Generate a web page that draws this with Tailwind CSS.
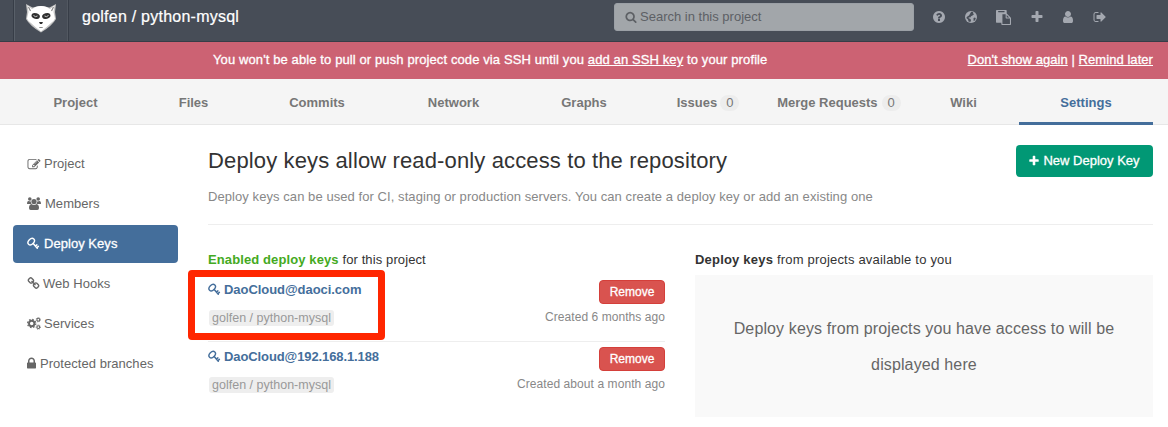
<!DOCTYPE html>
<html lang="en">
<head>
<meta charset="utf-8">
<title>golfen / python-mysql - Deploy Keys</title>
<script src="https://cdn.jsdelivr.net/npm/@tailwindcss/browser@4"></script>
</head>
<body class="w-[1168px] h-[427px] overflow-hidden bg-white font-['Liberation_Sans',Arial,sans-serif] text-[13px] leading-5 text-[#333]">
<svg class="hidden">
  <symbol id="plus" viewBox="0 0 1792 1792"><path d="M1600 736v192q0 40-28 68t-68 28h-416v416q0 40-28 68t-68 28h-192q-40 0-68-28t-28-68v-416h-416q-40 0-68-28t-28-68v-192q0-40 28-68t68-28h416v-416q0-40 28-68t68-28h192q40 0 68 28t28 68v416h416q40 0 68 28t28 68z"/></symbol>
  <symbol id="key" viewBox="0 0 13 13"><g fill="none" stroke="currentColor" stroke-linecap="round"><ellipse cx="4.200" cy="4.700" rx="3.700" ry="2.600" stroke-width="1.400" transform="rotate(-45 4.200 4.700)"/><path stroke-width="1.500" d="M6.200 6.500L10.300 11.300M8.500 9L9.900 7.900M10 10.500L11.400 9.400"/></g></symbol>
</svg>

<header class="h-[42px] bg-[#474d57] border-b border-[#373d47] flex text-white">
  <div class="ml-[13px] w-[56px] h-[41px] border-l border-r border-[#373d47] shrink-0 flex">
    <div class="w-full border-l border-r border-l-[#596069] border-r-[#525861] pl-[10px] pt-[3px]">
      <svg class="w-[32px] h-[30px]" viewBox="0 0 32 30">
        <path fill="#c4c4c4" d="M1 1L7.500 4.500L10 4Q16 2 22 4L24.500 4.500L31 1L30 9L31 16Q27 23 16 29.500Q5 23 1 16L2 9z"/>
        <path fill="#fff" d="M2.500 2.500L7 6L10.500 4Q16 2 21.500 4L25 6L29.500 2.500L28.500 9L30 15.500Q29 18 26 20Q22 24 16 28.500Q10 24 6 20Q3 18 2 15.500L3.500 9z"/>
        <path fill="none" stroke="#8b8b8b" stroke-width="1.200" d="M3.500 4l2 4M28.500 4l-2 4M14.300 24.500h3.400"/>
        <ellipse cx="10.700" cy="13" rx="4.300" ry="2.800" fill="#2f2f2f" transform="rotate(18 10.700 13)"/>
        <ellipse cx="21.300" cy="13" rx="4.300" ry="2.800" fill="#2f2f2f" transform="rotate(-18 21.300 13)"/>
        <path fill="none" stroke="#ddd" stroke-width=".9" d="M8.500 12.500q2 2 4 .5M23.500 12.500q-2 2-4 .5"/>
        <path fill="#2f2f2f" d="M14 19h4l-1 2h-2z"/>
      </svg>
    </div>
  </div>
  <div class="ml-[13px] mt-[7px] w-[532px] text-[16px] leading-[20px] tracking-[0.24px] [-webkit-text-stroke:0.2px_white]">golfen / python-mysql</div>
  <div class="mt-[3px] w-[300px] h-[28px] rounded-[3px] bg-[#a2a6aa] border border-[#9ba0a6] pl-[10px] flex items-center text-[#5d6065]">
    <svg class="w-[12px] h-[12px] mr-[3px]" fill="currentColor" viewBox="0 0 1792 1792"><path d="M1216 832q0-185-131.500-316.500t-316.500-131.500-316.500 131.500-131.500 316.500 131.500 316.500 316.500 131.500 316.500-131.500 131.500-316.500zm512 832q0 52-38 90t-90 38q-54 0-90-38l-343-342q-179 124-399 124-143 0-273.500-55.500t-225-150-150-225-55.500-273.500 55.500-273.500 150-225 225-150 273.500-55.500 273.500 55.500 225 150 150 225 55.500 273.500q0 220-124 399l343 343q37 37 37 90z"/></svg>
    <span>Search in this project</span>
  </div>
  <nav class="ml-[18px] mt-[10px] h-[14px] flex fill-[#a4a8b0]">
    <svg class="w-[14px] h-[14px]" viewBox="0 0 1792 1792"><path d="M1024 1376v-192q0-14-9-23t-23-9h-192q-14 0-23 9t-9 23v192q0 14 9 23t23 9h192q14 0 23-9t9-23zm256-672q0-88-55.500-163t-138.500-116-170-41q-243 0-371 213-15 24 8 42l132 100q7 6 19 6 16 0 25-12 53-68 86-92 34-24 86-24 48 0 85.500 26t37.500 59q0 38-20 61t-68 45q-63 28-115.500 86.500t-52.500 125.500v36q0 14 9 23t23 9h192q14 0 23-9t9-23q0-19 21.500-49.500t54.500-49.500q32-18 49-28.500t46-35 44.500-48 28-60.500 12.500-81zm384 192q0 209-103 385.500t-279.500 279.500-385.500 103-385.500-103-279.500-279.500-103-385.500 103-385.500 279.500-279.500 385.500-103 385.500 103 279.500 279.500 103 385.500z"/></svg>
    <svg class="ml-[18px] w-[14px] h-[14px]" viewBox="0 0 14 14"><circle cx="7" cy="7" r="6"/><path fill="#474d57" d="M7.200 1.700L9.200 2 9 3.500 10.200 4 8.500 5.500 7 6.200 6.300 7.500 4.800 7.200 4.600 8.300 6.500 9 7 10.500 6.300 12 4.500 11.400 4 9.500 2.300 8 3 6.800 5 5.500zM9.500 8l1.500-.5.800 1-1 2-1.200.5z"/></svg>
    <svg class="ml-[18px] w-[15px] h-[15px]" viewBox="0 0 1792 1792"><path d="M768 1664h896v-640h-416q-40 0-68-28t-28-68v-416h-384v1152zm256-1440v-64q0-13-9.500-22.500t-22.500-9.500h-704q-13 0-22.500 9.500t-9.500 22.500v64q0 13 9.500 22.500t22.500 9.500h704q13 0 22.500-9.500t9.500-22.500zm256 672h299l-299-299v299zm512 128v672q0 40-28 68t-68 28h-960q-40 0-68-28t-28-68v-160h-544q-40 0-68-28t-28-68v-1344q0-40 28-68t68-28h1088q40 0 68 28t28 68v328q21 13 36 28l408 408q28 28 48 76t20 88z"/></svg>
    <svg class="ml-[19px] w-[14px] h-[14px]"><use href="#plus"/></svg>
    <svg class="ml-[17px] w-[14px] h-[14px]" viewBox="0 0 1792 1792"><path d="M1536 1399q0 109-62.500 187t-150.500 78h-854q-88 0-150.500-78t-62.500-187q0-85 8.500-160.500t31.500-152 58.500-131 94-89 134.500-34.500q131 128 313 128t313-128q76 0 134.500 34.500t94 89 58.500 131 31.500 152 8.500 160.500zm-256-887q0 159-112.500 271.500t-271.500 112.500-271.500-112.500-112.500-271.500 112.500-271.500 271.500-112.500 271.500 112.500 112.500 271.500z"/></svg>
    <svg class="ml-[18px] w-[14px] h-[14px]" viewBox="0 0 1792 1792"><path d="M704 1440q0 4 1 20t.5 26.500-3 23.500-10 19.500-20.500 6.500h-320q-119 0-203.500-84.500t-84.500-203.500v-704q0-119 84.500-203.500t203.500-84.500h320q13 0 22.500 9.500t9.500 22.500q0 4 1 20t.5 26.500-3 23.500-10 19.500-20.500 6.500h-320q-66 0-113 47t-47 113v704q0 66 47 113t113 47h312l11.500 1 11.500 3 8 5.500 7 9 2 13.500zm928-544q0 26-19 45l-544 544q-19 19-45 19t-45-19-19-45v-288h-448q-26 0-45-19t-19-45v-384q0-26 19-45t45-19h448v-288q0-26 19-45t45-19 45 19l544 544q19 19 19 45z"/></svg>
  </nav>
</header>

<div class="h-[37px] bg-[#cc6273] text-white flex justify-between pl-[213px] pr-[15px] pt-[8px] [-webkit-text-stroke:0.3px_white]">
  <div class="tracking-[0.11px]">You won't be able to pull or push project code via SSH until you <a class="underline">add an SSH key</a> to your profile</div>
  <div class="tracking-[0.06px]"><a class="underline">Don't show again</a> | <a class="underline">Remind later</a></div>
</div>

<nav class="h-[46px] bg-[#f5f5f5] border-b border-[#e7e7e7] pl-[13px] flex text-center font-bold text-[#777] leading-[48px]">
  <a class="w-[125px]">Project</a>
  <a class="w-[111px]">Files</a>
  <a class="w-[136px]">Commits</a>
  <a class="w-[137px]">Network</a>
  <a class="w-[124px]">Graphs</a>
  <a class="w-[124px] flex items-center justify-center gap-[3px] pt-[3px]">Issues <span class="font-normal leading-[16px] rounded-full bg-[#ededed] px-[6px]">0</span></a>
  <a class="w-[138px] flex items-center justify-center gap-[4px] pt-[3px]">Merge Requests <span class="font-normal leading-[16px] rounded-full bg-[#ededed] px-[6px]">0</span></a>
  <a class="w-[111px]">Wiki</a>
  <a class="w-[134px] h-[46px] border-b-[3px] border-[#446e9b] text-[#446e9b]">Settings</a>
</nav>

<div class="flex pl-[13px]">
  <aside class="w-[165px] pt-[20px] flex flex-col gap-[2px] text-[#666] fill-[#666] tracking-[0.04px]">
    <a class="h-[38px] pl-[14px] flex items-center gap-[3px]">
      <svg class="w-[14px] h-[13px]" viewBox="0 0 1792 1792"><path d="M888 1184l116-116-152-152-116 116v56h96v96h56zm440-720q-16-16-33 1l-350 350q-17 17-1 33t33-1l350-350q17-17 1-33zm80 594v190q0 119-84.500 203.500t-203.500 84.500h-832q-119 0-203.500-84.500t-84.500-203.500v-832q0-119 84.500-203.500t203.500-84.500h832q63 0 117 25 15 7 18 23 3 17-9 29l-49 49q-14 14-32 8-23-6-45-6h-832q-66 0-113 47t-47 113v832q0 66 47 113t113 47h832q66 0 113-47t47-113v-126q0-13 9-22l64-64q15-15 35-7t20 29zm-96-738l288 288-672 672h-288v-288zm444 132l-92 92-288-288 92-92q28-28 68-28t68 28l152 152q28 28 28 68t-28 68z"/></svg>Project</a>
    <a class="h-[38px] pl-[14px] flex items-center gap-[4px]">
      <svg class="w-[14px] h-[13px] mb-px" viewBox="0 0 14 13"><circle cx="2.800" cy="2" r="1.800"/><circle cx="11.200" cy="2" r="1.800"/><path d="M0 6.500Q0 4 1.300 4L3.800 4.400Q3.800 6 4.700 7H1.400Q0 7.300 0 6.500zM14 6.500Q14 4 12.700 4L10.200 4.400Q10.200 6 9.300 7h3.300Q14 7.300 14 6.500z"/><circle cx="7" cy="4.600" r="2.600"/><path d="M4.500 7Q7 9.200 9.500 7Q12 7.500 12 11Q12 13 10.300 13H3.700Q2 13 2 11Q2 7.500 4.500 7z"/></svg>Members</a>
    <a class="h-[38px] pl-[14px] flex items-center gap-[4px] rounded bg-[#446e9b] text-white fill-white [-webkit-text-stroke:0.3px_white]">
      <svg class="w-[13px] h-[13px] mb-px"><use href="#key"/></svg>Deploy Keys</a>
    <a class="h-[38px] pl-[14px] flex items-center gap-[3px]">
      <svg class="w-[13px] h-[13px] mb-px" viewBox="0 0 1792 1792"><path d="M1520 1216q0-40-28-68l-208-208q-28-28-68-28-42 0-72 32 3 3 19 18.500t21.500 21.500 15 19 13 25.500 3.500 27.500q0 40-28 68t-68 28q-15 0-27.500-3.500t-25.500-13-19-15-21.500-21.500-18.500-19q-33 31-33 73 0 40 28 68l206 207q27 27 68 27 40 0 68-26l147-146q28-28 28-67zm-703-705q0-40-28-68l-206-207q-28-28-68-28-39 0-68 27l-147 146q-28 28-28 67 0 40 28 68l208 208q27 27 68 27 42 0 72-31-3-3-19-18.500t-21.500-21.500-15-19-13-25.500-3.500-27.500q0-40 28-68t68-28q15 0 27.500 3.500t25.500 13 19 15 21.500 21.500 18.500 19q33-31 33-73zm895 705q0 120-85 203l-147 146q-83 83-203 83-121 0-204-85l-206-207q-83-83-83-203 0-123 88-209l-88-88q-86 88-208 88-120 0-204-84l-208-208q-84-84-84-204t85-203l147-146q83-83 203-83 121 0 204 85l206 207q83 83 83 203 0 123-88 209l88 88q86-88 208-88 120 0 204 84l208 208q84 84 84 204z"/></svg>Web Hooks</a>
    <a class="h-[38px] pl-[14px] flex items-center gap-[3px]">
      <svg class="w-[14px] h-[13px] mb-px fill-none stroke-[#666]" viewBox="0 0 14 13"><circle cx="4.700" cy="6.500" r="2.700" stroke-width="1.900"/><circle cx="4.700" cy="6.500" r="4.100" stroke-width="1.200" stroke-dasharray="1.610 1.610"/><circle cx="11.300" cy="2.700" r="1.400" stroke-width="1.100"/><circle cx="11.300" cy="2.700" r="2.200" stroke-width=".8" stroke-dasharray=".864 .864"/><circle cx="11.300" cy="10.100" r="1.400" stroke-width="1.100"/><circle cx="11.300" cy="10.100" r="2.200" stroke-width=".8" stroke-dasharray=".864 .864"/></svg>Services</a>
    <a class="h-[38px] pl-[14px] flex items-center gap-[4px]">
      <svg class="w-[9px] h-[13px] mb-px" viewBox="320 64 1152 1664"><path d="M640 768h512v-192q0-106-75-181t-181-75-181 75-75 181v192zm832 96v576q0 40-28 68t-68 28h-960q-40 0-68-28t-28-68v-576q0-40 28-68t68-28h32v-192q0-184 132-316t316-132 316 132 132 316v192h32q40 0 68 28t28 68z"/></svg>Protected branches</a>
  </aside>

  <main class="ml-[30px] w-[945px]">
    <div class="flex justify-between pt-[20px]">
      <h1 class="text-[22px] leading-[32px] tracking-[0.13px] text-[#333]">Deploy keys allow read-only access to the repository</h1>
      <button class="w-[137px] h-[32px] rounded bg-[#019875] text-white fill-white flex items-center justify-center gap-[3px] pb-[1px] pr-px [-webkit-text-stroke:0.3px_white]"><svg class="w-[12px] h-[12px]"><use href="#plus"/></svg>New Deploy Key</button>
    </div>
    <p class="mt-[10px] text-[#888] tracking-[0.07px]">Deploy keys can be used for CI, staging or production servers. You can create a deploy key or add an existing one</p>
    <hr class="mt-[17px] border-[#eee]">
    <div class="flex justify-between pt-[25px]">
      <section class="w-[457px]">
        <h2 class="tracking-[0.11px]"><b class="text-[#4a2]">Enabled deploy keys</b> for this project</h2>
        <div class="relative h-[72px] border-b border-[#eee] flex justify-between pt-[10px]">
          <div class="absolute left-[-20px] top-0 w-[197px] h-[70px] border-[7px] border-[#ff2600] rounded-[4px]"></div>
          <div>
            <a class="flex items-center gap-[3px] font-bold text-[#446e9b] tracking-[-0.05px]"><svg class="w-[13px] h-[13px] mb-[2px]"><use href="#key"/></svg>DaoCloud@daoci.com</a>
            <span class="mt-[10px] ml-px w-[125px] h-[16px] rounded-[3px] bg-[#eee] text-[#999] text-[12.5px] leading-[17px] flex justify-center">golfen / python-mysql</span>
          </div>
          <div class="flex flex-col items-end text-[#888]">
            <button class="w-[66px] h-[24px] rounded bg-[#d9534f] border border-[#d43f3a] text-white text-[12px] leading-[22px] [-webkit-text-stroke:0.3px_white]">Remove</button>
            <span class="mt-[3px] text-[12px] tracking-[0.06px]">Created 6 months ago</span>
          </div>
        </div>
        <div class="h-[67px] flex justify-between pt-[5px]">
          <div>
            <a class="flex items-center gap-[3px] font-bold text-[#446e9b] tracking-[-0.1px]"><svg class="w-[13px] h-[13px] mb-[2px]"><use href="#key"/></svg>DaoCloud@192.168.1.188</a>
            <span class="mt-[10px] ml-px w-[125px] h-[16px] rounded-[3px] bg-[#eee] text-[#999] text-[12.5px] leading-[17px] flex justify-center">golfen / python-mysql</span>
          </div>
          <div class="flex flex-col items-end text-[#888]">
            <button class="w-[66px] h-[24px] rounded bg-[#d9534f] border border-[#d43f3a] text-white text-[12px] leading-[22px] [-webkit-text-stroke:0.3px_white]">Remove</button>
            <span class="mt-[3px] text-[12px] tracking-[0.08px]">Created about a month ago</span>
          </div>
        </div>
      </section>
      <section class="w-[458px]">
        <h2 class="tracking-[0.2px]"><b>Deploy keys</b> from projects available to you</h2>
        <div class="mt-[5px] h-[142px] bg-[#f9f9f9] text-[#666] text-[16px] leading-[36px] tracking-[0.12px] text-center pt-[36px] px-[20px]">Deploy keys from projects you have access to will be displayed here</div>
      </section>
    </div>
  </main>
</div>
</body>
</html>
